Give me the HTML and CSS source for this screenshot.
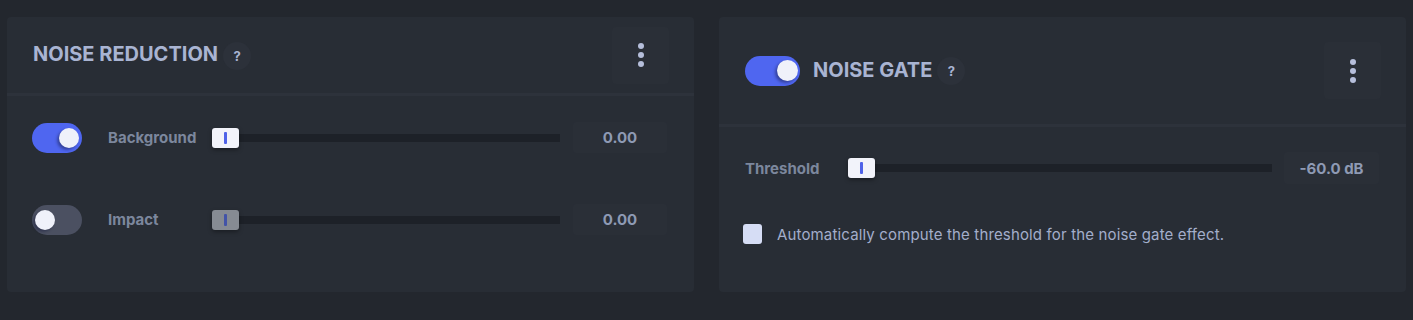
FILE: index.html
```html
<!DOCTYPE html>
<html lang="en">
<head>
<meta charset="utf-8">
<title>Audio effects</title>
<link rel="stylesheet" href="styles.css">
</head>
<body>
<main class="panels">
  <section class="card">
    <header class="card-head head-short">
      <h2 class="title">NOISE REDUCTION</h2>
      <span class="help">?</span>
      <button class="kebab" aria-label="More"><i></i><i></i><i></i></button>
    </header>
    <div class="card-body body-nr">
      <div class="row">
        <span class="toggle on"><span class="knob"></span></span>
        <span class="label label-nr">Background</span>
        <div class="slider"><span class="thumb"><i></i></span></div>
        <span class="value value-nr">0.00</span>
      </div>
      <div class="row">
        <span class="toggle"><span class="knob"></span></span>
        <span class="label label-nr">Impact</span>
        <div class="slider"><span class="thumb off"><i></i></span></div>
        <span class="value value-nr">0.00</span>
      </div>
    </div>
  </section>
  <section class="card">
    <header class="card-head head-tall">
      <span class="toggle on big"><span class="knob"></span></span>
      <h2 class="title">NOISE GATE</h2>
      <span class="help">?</span>
      <button class="kebab" aria-label="More"><i></i><i></i><i></i></button>
    </header>
    <div class="card-body body-ng">
      <div class="row">
        <span class="label label-ng">Threshold</span>
        <div class="slider"><span class="thumb"><i></i></span></div>
        <span class="value value-ng">-60.0 dB</span>
      </div>
      <label class="check-row">
        <span class="checkbox"></span>
        <span class="check-text">Automatically compute the threshold for the noise gate effect.</span>
      </label>
    </div>
  </section>
</main>
</body>
</html>
```
FILE: styles.css
```css
* { box-sizing: border-box; }
html, body { margin: 0; padding: 0; }
body {
  background: #23272e;
  font-family: Inter, Roboto, "Liberation Sans", sans-serif;
  width: 1413px;
  height: 320px;
  overflow: hidden;
}
.panels {
  display: grid;
  grid-template-columns: 1fr 1fr;
  gap: 25px;
  padding: 17px 7px 0 7px;
}
.card {
  background: #282d35;
  border-radius: 4px;
  height: 275px;
  display: flex;
  flex-direction: column;
}
.card-head {
  display: flex;
  align-items: center;
  padding: 0 25px 0 26px;
  border-bottom: 3px solid #2d323b;
}
.head-short { height: 79px; }
.head-tall { height: 110px; }
.title {
  margin: 0 0 2px 0;
  font-size: 20px;
  font-weight: 700;
  color: #a9b4d2;
  letter-spacing: 0;
}
.help {
  width: 28px;
  height: 28px;
  border-radius: 50%;
  background: #2c313a;
  color: #a9b4d2;
  font-size: 13px;
  font-weight: 700;
  display: flex;
  align-items: center;
  justify-content: center;
  margin-left: 5px;
  margin-top: 1px;
}
.kebab {
  margin-left: auto;
  width: 57px;
  height: 57px;
  border: 0;
  border-radius: 4px;
  background: #2a2f37;
  display: flex;
  flex-direction: column;
  align-items: center;
  justify-content: center;
  gap: 3px;
  padding: 0;
}
.kebab i {
  display: block;
  width: 6px;
  height: 6px;
  border-radius: 50%;
  background: #b6bfdb;
}
.card-body {
  display: flex;
  flex-direction: column;
}
.body-nr { padding: 26px 27px 0 25px; gap: 51px; }
.body-ng { padding: 25px 27px 0 26px; gap: 40px; }
.row {
  display: flex;
  align-items: center;
  height: 31px;
}
.body-ng .row { height: 32px; }
.toggle {
  position: relative;
  width: 50px;
  height: 30px;
  border-radius: 15px;
  background: #4b5061;
  flex: none;
}
.toggle.on { background: #4f66f0; }
.toggle.big { width: 55px; height: 30px; margin-right: 13px; }
.knob {
  position: absolute;
  top: 5px;
  left: 3px;
  width: 20px;
  height: 20px;
  border-radius: 50%;
  background: #eff1fa;
  box-shadow: -2px 2px 3px rgba(20, 24, 60, 0.45);
}
.toggle.on .knob { left: auto; right: 3px; }
.toggle.big .knob { top: 4px; width: 21px; height: 21px; right: 2px; }
.label {
  font-size: 15px;
  font-weight: 700;
  color: #7c879d;
  flex: none;
}
.label-nr { margin-left: 26px; width: 104px; }
.label-ng { width: 103px; }
.slider {
  flex: 1;
  height: 8px;
  background: #1d2128;
  position: relative;
  display: flex;
  align-items: center;
}
.thumb {
  width: 27px;
  height: 20px;
  border-radius: 3px;
  background: #f2f3fa;
  box-shadow: 0 2px 4px rgba(0, 0, 0, 0.35);
  display: flex;
  align-items: center;
  justify-content: center;
  flex: none;
}
.thumb i {
  display: block;
  width: 3px;
  height: 12px;
  border-radius: 1px;
  background: #4f62e8;
}
.thumb.off { background: #868b93; }
.thumb.off i { background: #4253a8; }
.value {
  height: 100%;
  background: #2a2f37;
  border-radius: 3px;
  color: #8e9ab4;
  font-size: 15px;
  font-weight: 700;
  display: flex;
  align-items: center;
  justify-content: center;
  flex: none;
}
.value-nr { width: 94px; margin-left: 13px; }
.value-ng { width: 95px; margin-left: 12px; }
.check-row {
  display: flex;
  align-items: center;
  height: 20px;
}
.checkbox {
  width: 19px;
  height: 20px;
  border-radius: 3px;
  background: #d6ddf5;
  margin-left: -2px;
  flex: none;
}
.check-text {
  margin-left: 15px;
  font-size: 15px;
  letter-spacing: 0.15px;
  color: #a3aecb;
}
```
